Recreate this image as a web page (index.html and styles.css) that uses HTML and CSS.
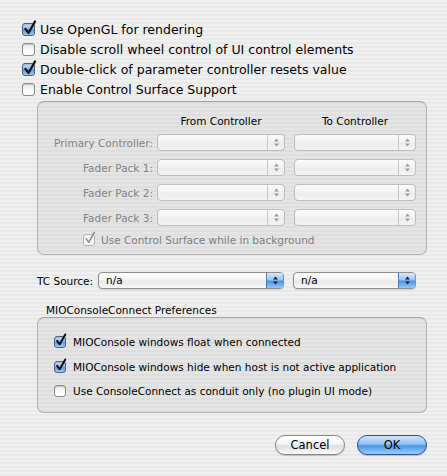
FILE: index.html
```html
<!DOCTYPE html>
<html lang="en">
<head>
    <meta charset="UTF-8">
    <title>Control Surface Preferences</title>
    <link rel="stylesheet" href="styles.css">
</head>
<body>
    <div class="window">
        <div class="options">
            <div class="check-row">
                <span class="box on"><svg class="tick" width="14" height="16" viewBox="0 0 14 16"><path d="M2.5 9 L5.5 13 L12 1.5"/></svg></span>
                Use OpenGL for rendering
            </div>
            <div class="check-row">
                <span class="box"></span>
                Disable scroll wheel control of UI control elements
            </div>
            <div class="check-row">
                <span class="box on"><svg class="tick" width="14" height="16" viewBox="0 0 14 16"><path d="M2.5 9 L5.5 13 L12 1.5"/></svg></span>
                Double-click of parameter controller resets value
            </div>
            <div class="check-row">
                <span class="box"></span>
                Enable Control Surface Support
            </div>
        </div>

        <div class="group surface">
            <div class="surface-grid">
                <span></span>
                <span class="col-head">From Controller</span>
                <span class="col-head right">To Controller</span>

                <span class="row-label">Primary Controller:</span>
                <span class="popup off"><span class="value"></span><span class="arrows"><svg width="5" height="9" viewBox="0 0 5 9"><path d="M0 3.5 L2.5 0.5 L5 3.5Z M0 5.5 L2.5 8.5 L5 5.5Z"/></svg></span></span>
                <span class="cell-right"><span class="popup off"><span class="value"></span><span class="arrows"><svg width="5" height="9" viewBox="0 0 5 9"><path d="M0 3.5 L2.5 0.5 L5 3.5Z M0 5.5 L2.5 8.5 L5 5.5Z"/></svg></span></span></span>

                <span class="row-label">Fader Pack 1:</span>
                <span class="popup off"><span class="value"></span><span class="arrows"><svg width="5" height="9" viewBox="0 0 5 9"><path d="M0 3.5 L2.5 0.5 L5 3.5Z M0 5.5 L2.5 8.5 L5 5.5Z"/></svg></span></span>
                <span class="cell-right"><span class="popup off"><span class="value"></span><span class="arrows"><svg width="5" height="9" viewBox="0 0 5 9"><path d="M0 3.5 L2.5 0.5 L5 3.5Z M0 5.5 L2.5 8.5 L5 5.5Z"/></svg></span></span></span>

                <span class="row-label">Fader Pack 2:</span>
                <span class="popup off"><span class="value"></span><span class="arrows"><svg width="5" height="9" viewBox="0 0 5 9"><path d="M0 3.5 L2.5 0.5 L5 3.5Z M0 5.5 L2.5 8.5 L5 5.5Z"/></svg></span></span>
                <span class="cell-right"><span class="popup off"><span class="value"></span><span class="arrows"><svg width="5" height="9" viewBox="0 0 5 9"><path d="M0 3.5 L2.5 0.5 L5 3.5Z M0 5.5 L2.5 8.5 L5 5.5Z"/></svg></span></span></span>

                <span class="row-label">Fader Pack 3:</span>
                <span class="popup off"><span class="value"></span><span class="arrows"><svg width="5" height="9" viewBox="0 0 5 9"><path d="M0 3.5 L2.5 0.5 L5 3.5Z M0 5.5 L2.5 8.5 L5 5.5Z"/></svg></span></span>
                <span class="cell-right"><span class="popup off"><span class="value"></span><span class="arrows"><svg width="5" height="9" viewBox="0 0 5 9"><path d="M0 3.5 L2.5 0.5 L5 3.5Z M0 5.5 L2.5 8.5 L5 5.5Z"/></svg></span></span></span>
            </div>
            <div class="bg-row">
                <span class="box small dim"><svg class="tick" width="12" height="14" viewBox="0 0 14 16"><path d="M2.5 9 L5.5 13 L12 1.5"/></svg></span>
                Use Control Surface while in background
            </div>
        </div>

        <div class="tc-row">
            <span class="tc-label">TC Source:</span>
            <span class="popup tc-main"><span class="value">n/a</span><span class="arrows blue"><svg width="5" height="9" viewBox="0 0 5 9"><path d="M0 3.5 L2.5 0.5 L5 3.5Z M0 5.5 L2.5 8.5 L5 5.5Z"/></svg></span></span>
            <span class="popup tc-second"><span class="value">n/a</span><span class="arrows blue"><svg width="5" height="9" viewBox="0 0 5 9"><path d="M0 3.5 L2.5 0.5 L5 3.5Z M0 5.5 L2.5 8.5 L5 5.5Z"/></svg></span></span>
        </div>

        <div class="mio-title">MIOConsoleConnect Preferences</div>
        <div class="group mio">
            <div class="mio-row">
                <span class="box small on"><svg class="tick" width="12" height="14" viewBox="0 0 14 16"><path d="M2.5 9 L5.5 13 L12 1.5"/></svg></span>
                MIOConsole windows float when connected
            </div>
            <div class="mio-row">
                <span class="box small on"><svg class="tick" width="12" height="14" viewBox="0 0 14 16"><path d="M2.5 9 L5.5 13 L12 1.5"/></svg></span>
                MIOConsole windows hide when host is not active application
            </div>
            <div class="mio-row">
                <span class="box small"></span>
                Use ConsoleConnect as conduit only (no plugin UI mode)
            </div>
        </div>

        <div class="buttons">
            <button class="btn">Cancel</button>
            <button class="btn default">OK</button>
        </div>
    </div>
</body>
</html>
```

FILE: styles.css
```css
body {
    margin: 0;
    padding: 0;
    font-family: "DejaVu Sans", "Noto Sans", sans-serif;
    color: #000;
    background: repeating-linear-gradient(#f0f0f0 0, #f0f0f0 2px, #e9e9e9 2px, #e9e9e9 4px);
}
.window {
    width: 447px;
    height: 476px;
    padding-top: 19px;
    box-sizing: border-box;
}

/* checkboxes */
.options {
    padding-left: 22px;
}
.check-row {
    display: flex;
    align-items: center;
    gap: 5px;
    height: 20px;
    font-size: 12.5px;
}
.box {
    position: relative;
    flex: none;
    width: 13px;
    height: 13px;
    box-sizing: border-box;
    border: 1px solid #888;
    border-radius: 3px;
    background: linear-gradient(#e6e6e6, #fbfbfb 60%, #ffffff);
    box-shadow: inset 0 1px 1px rgba(0, 0, 0, 0.15);
}
.box.on {
    border-color: #4f5f80;
    background: linear-gradient(#c9e0f8, #8dbdf0 45%, #5a9ce6 55%, #9ed0f7);
}
.box.small {
    width: 12px;
    height: 12px;
}
.box.dim {
    border-color: #b3b3b3;
    background: linear-gradient(#f2f2f2, #fbfbfb);
    box-shadow: none;
}
.tick {
    position: absolute;
    left: 0;
    top: -4px;
    fill: none;
    stroke: #111;
    stroke-width: 2.3;
    stroke-linecap: round;
    stroke-linejoin: round;
}
.dim .tick {
    stroke: #8a8a8a;
    stroke-width: 1.8;
}

/* group boxes */
.group {
    margin-left: 37px;
    width: 390px;
    box-sizing: border-box;
    border: 1px solid #b2b2b2;
    border-top-color: #a2a2a2;
    border-radius: 7px;
    background: rgba(0, 0, 0, 0.045);
}
.surface {
    margin-top: 2px;
    height: 154px;
    padding-top: 10px;
}
.surface-grid {
    display: grid;
    grid-template-columns: 119px 128px 131px;
    grid-template-rows: 14px repeat(4, 17px);
    row-gap: 8px;
    font-size: 10.5px;
}
.col-head {
    align-self: end;
    line-height: 10px;
    text-align: center;
}
.col-head.right {
    padding-left: 9px;
}
.row-label {
    align-self: center;
    text-align: right;
    padding-right: 4px;
    color: #828282;
}
.cell-right {
    display: flex;
    padding-left: 9px;
}

/* popups */
.popup {
    display: flex;
    height: 17px;
    box-sizing: border-box;
    border: 1px solid #8d8d8d;
    border-radius: 4px;
    background: linear-gradient(#ffffff, #f3f3f3 45%, #e9e9e9 55%, #f7f7f7);
    box-shadow: 0 1px 1px rgba(0, 0, 0, 0.12);
    font-size: 10.5px;
}
.cell-right .popup {
    flex: 1;
}
.popup.off {
    border-color: #bdbdbd;
    background: linear-gradient(#fbfbfb, #f1f1f1 50%, #ececec 55%, #f4f4f4);
    box-shadow: none;
}
.popup .value {
    flex: 1;
    padding-left: 7px;
    line-height: 15px;
}
.popup .arrows {
    display: flex;
    align-items: center;
    justify-content: center;
    width: 16px;
    border-left: 1px solid #c9c9c9;
    border-radius: 0 3px 3px 0;
}
.popup .arrows svg {
    fill: #222;
}
.popup.off .arrows svg {
    fill: #9a9a9a;
}
.popup .arrows.blue {
    border-left-color: #5177b8;
    background: linear-gradient(#d6e8fc, #99c6f4 45%, #4d95e8 55%, #8fcaf8);
}

.bg-row {
    display: flex;
    align-items: center;
    gap: 6px;
    margin-top: 7px;
    padding-left: 45px;
    height: 13px;
    font-size: 10.5px;
    color: #7e7e7e;
}

/* TC source */
.tc-row {
    display: flex;
    align-items: center;
    margin-top: 17px;
    padding-left: 37px;
    font-size: 10.5px;
}
.tc-label {
    width: 61px;
}
.tc-main {
    width: 186px;
}
.tc-second {
    width: 123px;
    margin-left: 9px;
}

/* MIO */
.mio-title {
    margin-top: 15px;
    margin-left: 46px;
    font-size: 10.5px;
    line-height: 13px;
}
.mio {
    height: 96px;
    padding: 12px 0 0 16px;
}
.mio-row {
    display: flex;
    align-items: center;
    gap: 7px;
    height: 24.5px;
    font-size: 10.5px;
}

/* buttons */
.buttons {
    display: flex;
    justify-content: flex-end;
    gap: 12px;
    margin-top: 22px;
    padding-right: 20px;
}
.btn {
    width: 70px;
    height: 20px;
    padding: 0;
    font-family: "DejaVu Sans", "Noto Sans", sans-serif;
    font-size: 11.5px;
    color: #000;
    border: 1px solid #868686;
    border-radius: 10px;
    background: linear-gradient(#ffffff, #f4f4f4 45%, #dedede 55%, #fbfbfb);
    box-shadow: 0 1px 1px rgba(0, 0, 0, 0.2);
}
.btn.default {
    border-color: #2d4f93;
    background: linear-gradient(#cfe5fc, #90c2f5 45%, #4b94e9 55%, #95d3fb);
}
```
